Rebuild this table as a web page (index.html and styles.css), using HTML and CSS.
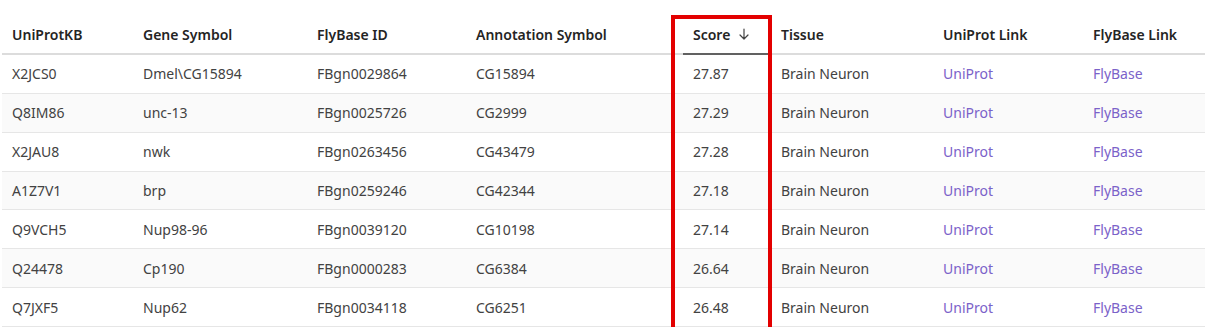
FILE: index.html
```html
<!DOCTYPE html>
<html>
<head>
<meta charset="utf-8">
<link rel="stylesheet" href="styles.css">
</head>
<body>
<div class="wrap">
  <table class="grid">
    <colgroup>
      <col class="c1"><col class="c2"><col class="c3"><col class="c4"><col class="c5"><col class="c6"><col class="c7"><col class="c8">
    </colgroup>
    <thead>
      <tr>
        <th>UniProtKB</th>
        <th>Gene Symbol</th>
        <th>FlyBase ID</th>
        <th>Annotation Symbol</th>
        <th class="sorted"><span class="sort">Score<svg class="arrow" width="10" height="12" viewBox="0 0 10 12"><path d="M5 1v10M1 7l4 4 4-4" fill="none" stroke="#444" stroke-width="1.2" stroke-linecap="round" stroke-linejoin="round"/></svg></span></th>
        <th>Tissue</th>
        <th>UniProt Link</th>
        <th>FlyBase Link</th>
      </tr>
    </thead>
    <tbody>
      <tr><td>X2JCS0</td><td>Dmel\CG15894</td><td>FBgn0029864</td><td>CG15894</td><td>27.87</td><td>Brain Neuron</td><td><a href="#">UniProt</a></td><td><a href="#">FlyBase</a></td></tr>
      <tr><td>Q8IM86</td><td>unc-13</td><td>FBgn0025726</td><td>CG2999</td><td>27.29</td><td>Brain Neuron</td><td><a href="#">UniProt</a></td><td><a href="#">FlyBase</a></td></tr>
      <tr><td>X2JAU8</td><td>nwk</td><td>FBgn0263456</td><td>CG43479</td><td>27.28</td><td>Brain Neuron</td><td><a href="#">UniProt</a></td><td><a href="#">FlyBase</a></td></tr>
      <tr><td>A1Z7V1</td><td>brp</td><td>FBgn0259246</td><td>CG42344</td><td>27.18</td><td>Brain Neuron</td><td><a href="#">UniProt</a></td><td><a href="#">FlyBase</a></td></tr>
      <tr><td>Q9VCH5</td><td>Nup98-96</td><td>FBgn0039120</td><td>CG10198</td><td>27.14</td><td>Brain Neuron</td><td><a href="#">UniProt</a></td><td><a href="#">FlyBase</a></td></tr>
      <tr><td>Q24478</td><td>Cp190</td><td>FBgn0000283</td><td>CG6384</td><td>26.64</td><td>Brain Neuron</td><td><a href="#">UniProt</a></td><td><a href="#">FlyBase</a></td></tr>
      <tr><td>Q7JXF5</td><td>Nup62</td><td>FBgn0034118</td><td>CG6251</td><td>26.48</td><td>Brain Neuron</td><td><a href="#">UniProt</a></td><td><a href="#">FlyBase</a></td></tr>
    </tbody>
  </table>
  <div class="highlight"></div>
</div>
</body>
</html>
```

FILE: styles.css
```css
html, body {
  margin: 0;
  padding: 0;
  background: #ffffff;
}
body {
  font-family: "Noto Sans", "Open Sans", sans-serif;
  font-size: 14px;
  color: #424242;
}
.wrap {
  position: relative;
  padding: 15px 0 0 2px;
}
.grid {
  border-collapse: collapse;
  table-layout: fixed;
  width: 1203px;
}
.c1 { width: 131px; }
.c2 { width: 174px; }
.c3 { width: 159px; }
.c4 { width: 217px; }
.c5 { width: 88px; }
.c6 { width: 162px; }
.c7 { width: 150px; }
.c8 { width: 122px; }
th {
  text-align: left;
  font-weight: 600;
  color: #242424;
  height: 38px;
  padding: 0 10px;
  border-bottom: 2px solid #dcdcdc;
}
th.sorted {
  border-bottom-color: #616161;
}
.sort {
  display: inline-flex;
  align-items: center;
  gap: 9px;
}
.arrow {
  display: block;
}
td {
  height: 37.86px;
  padding: 0 10px;
  border-bottom: 1px solid #e6e6e6;
  white-space: nowrap;
}
tbody tr:nth-child(even) {
  background: #fafafa;
}
a {
  color: #7b62c9;
  text-decoration: none;
}
.highlight {
  position: absolute;
  left: 671px;
  top: 15px;
  width: 93px;
  height: 309px;
  border: 4px solid #e30000;
}
```
